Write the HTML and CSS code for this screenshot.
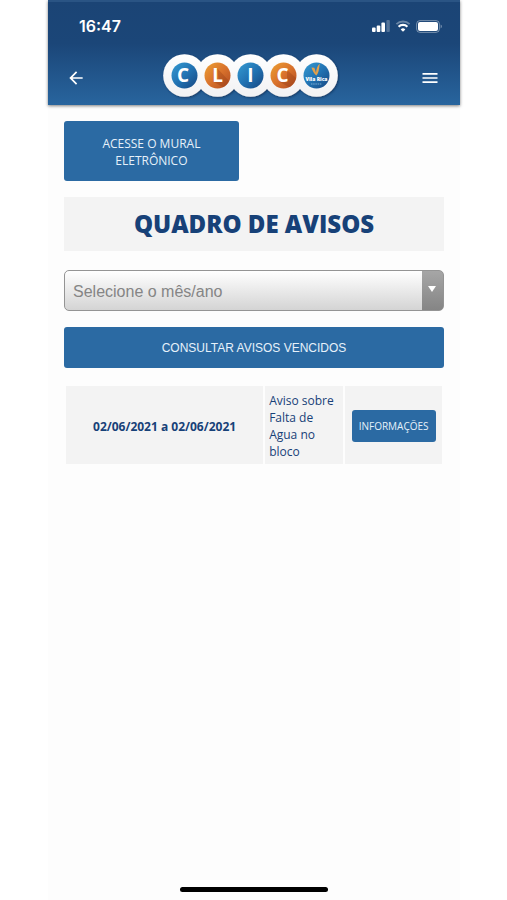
FILE: index.html
```html
<!DOCTYPE html>
<html lang="pt-BR">
<head>
  <meta charset="utf-8">
  <meta name="viewport" content="width=device-width, initial-scale=1">
  <title>Quadro de Avisos</title>
  <link rel="stylesheet" href="styles.css">
</head>
<body>
  <div class="screen">
    <header class="header">
      <div class="status">
        <span class="clock">16:47</span>
        <div class="status-icons">
          <svg width="18" height="12" viewBox="0 0 18 12" aria-hidden="true">
            <g fill="#fff">
              <rect x="0" y="7.500" width="3.600" height="4.500" rx="1"/>
              <rect x="4.700" y="5.500" width="3.600" height="6.500" rx="1"/>
              <rect x="9.400" y="2.500" width="3.600" height="9.500" rx="1"/>
              <rect x="14.400" y="0" width="3.400" height="12" rx="1" opacity=".25"/>
            </g>
          </svg>
          <svg width="16" height="12" viewBox="0 0 16 12" fill="none" aria-hidden="true">
            <path d="M1.400 4.200a9.400 9.400 0 0 1 13.200 0" stroke="#fff" stroke-opacity=".35" stroke-width="1.800"/>
            <path d="M3.600 6.700a6.300 6.300 0 0 1 8.800 0" stroke="#fff" stroke-width="2.200"/>
            <path d="M5.700 9.400a3.300 3.300 0 0 1 4.600 0L8 11.800z" fill="#fff"/>
          </svg>
          <svg width="27" height="13" viewBox="0 0 27 13" aria-hidden="true">
            <rect x=".6" y=".6" width="22.800" height="11.800" rx="3.400" fill="none" stroke="#fff" stroke-opacity=".4"/>
            <rect x="2" y="2" width="20" height="9" rx="2" fill="#fff"/>
            <path d="M24.600 4.600c1.800.5 1.800 3.300 0 3.800z" fill="#fff" fill-opacity=".4"/>
          </svg>
        </div>
      </div>
      <nav class="navbar">
        <button class="icon-button" type="button" aria-label="Voltar">
          <svg width="20" height="20" viewBox="0 0 24 24" fill="#fff" aria-hidden="true"><path d="M20 11H7.83l5.59-5.59L12 4l-8 8 8 8 1.41-1.41L7.83 13H20z"/></svg>
        </button>
        <svg class="logo" width="180" height="48" viewBox="0 0 180 48" role="img" aria-label="CLICO Vila Rica">
          <defs>
            <linearGradient id="blue" x1="0" y1="0" x2="1" y2="1">
              <stop offset="0" stop-color="#359bd2"/><stop offset=".5" stop-color="#2273b3"/><stop offset="1" stop-color="#174681"/>
            </linearGradient>
            <linearGradient id="orange" x1="0" y1="0" x2="1" y2="1">
              <stop offset="0" stop-color="#eda033"/><stop offset=".5" stop-color="#d9722c"/><stop offset="1" stop-color="#b04c22"/>
            </linearGradient>
            <linearGradient id="ring" x1="0" y1="0" x2="0" y2="1">
              <stop offset="0" stop-color="#fff"/><stop offset="1" stop-color="#f1f1f3"/>
            </linearGradient>
            <filter id="shade" x="-10%" y="-20%" width="120%" height="150%">
              <feDropShadow dx="1" dy="1" stdDeviation="1" flood-color="#07294f" flood-opacity=".7"/>
            </filter>
          </defs>
          <g filter="url(#shade)">
            <circle cx="24.500" cy="23.500" r="21.300" fill="url(#ring)"/>
            <circle cx="57.500" cy="23.500" r="21.300" fill="url(#ring)"/>
            <circle cx="90.500" cy="23.500" r="21.300" fill="url(#ring)"/>
            <circle cx="123.500" cy="23.500" r="21.300" fill="url(#ring)"/>
            <circle cx="156.500" cy="23.500" r="21.300" fill="url(#ring)"/>
          </g>
          <circle cx="24.500" cy="23.500" r="13" fill="url(#blue)"/>
          <circle cx="57.500" cy="23.500" r="13" fill="url(#orange)"/>
          <circle cx="90.500" cy="23.500" r="13" fill="url(#blue)"/>
          <circle cx="123.500" cy="23.500" r="13" fill="url(#orange)"/>
          <circle cx="156.500" cy="23.500" r="13" fill="url(#blue)"/>
          <path d="M57 16l12 13a13 13 0 0 1-6 6.200L54 30h5z" fill="#8a3410" opacity=".3"/>
          <path d="M127 18l9 8a13 13 0 0 1-7 9.200L120 30l7-1z" fill="#8a3410" opacity=".3"/>
          <g class="logo-letters">
            <text x="23" y="30">C</text>
            <text x="57.500" y="30">L</text>
            <text x="90.500" y="30">I</text>
            <text x="122.500" y="30">C</text>
          </g>
          <path d="M151.400 15.500l3 .2 1.600 5c.3-4 1.500-7 3.800-9.200l-.8 5.500c-.4 3-1.300 5-2.700 6.600-2.200-2-3.900-4.800-4.900-8.100z" fill="#e3a04a"/>
          <text class="logo-name" x="156.500" y="29">Vila Rica</text>
          <path d="M151 32h11" stroke="#b9dcf3" stroke-dasharray="1.500 .7" opacity=".6"/>
        </svg>
        <button class="icon-button" type="button" aria-label="Menu">
          <svg width="20" height="20" viewBox="0 0 24 24" fill="#fff" aria-hidden="true"><path d="M3 18h18v-2H3v2zm0-5h18v-2H3v2zm0-7v2h18V6H3z"/></svg>
        </button>
      </nav>
    </header>

    <main class="content">
      <a class="button mural" href="#mural">ACESSE O MURAL ELETRÔNICO</a>
      <h1 class="title">QUADRO DE AVISOS</h1>
      <div class="picker">
        <select class="picker-select" aria-label="Selecione o mês/ano">
          <option>Selecione o mês/ano</option>
        </select>
      </div>
      <button class="button expired" type="button">CONSULTAR AVISOS VENCIDOS</button>
      <table class="notices">
        <tr>
          <td class="period">02/06/2021 a 02/06/2021</td>
          <td class="subject">Aviso sobre Falta de Agua no bloco</td>
          <td class="action"><button class="button info" type="button">INFORMAÇÕES</button></td>
        </tr>
      </table>
    </main>

    <div class="home-bar"></div>
  </div>
</body>
</html>
```

FILE: styles.css
```css
* {
  box-sizing: border-box;
}

body {
  margin: 0;
  background: #fff;
  color: #174178;
  font-family: "Open Sans", sans-serif;
  font-size: 12px;
}

.screen {
  display: flex;
  flex-direction: column;
  min-height: 100vh;
  margin: 0 47px 0 48px;
  background: #fdfdfd;
}

.header {
  background: linear-gradient(#1b4475 0%, #1b4678 40%, #28659e 100%);
  border-top: 2px solid #2a5484;
  box-shadow: 0 1px 3px rgba(0, 0, 0, 0.5);
}

.status {
  display: flex;
  align-items: center;
  justify-content: space-between;
  height: 48px;
  padding: 0 17px 0 31px;
}

.clock {
  color: #fff;
  font-family: Inter, sans-serif;
  font-size: 16px;
  font-weight: 600;
}

.status-icons {
  display: flex;
  align-items: center;
  gap: 5px;
}

.navbar {
  display: flex;
  align-items: center;
  justify-content: space-between;
  height: 55px;
  padding: 0 20px 0 18px;
}

.icon-button {
  display: flex;
  padding: 0;
  border: 0;
  background: none;
}

.logo {
  margin: 0 6px 3px 0;
}

.logo-letters {
  fill: #fff;
  font: 700 19px "Open Sans", sans-serif;
  text-anchor: middle;
}

.logo-name {
  fill: #fff;
  font: 800 5px "Open Sans", sans-serif;
  text-anchor: middle;
}

.content {
  display: flex;
  flex: 1;
  flex-direction: column;
  gap: 16px;
  padding: 16px;
}

.button {
  border: 0;
  border-radius: 3px;
  background: #2b6aa3;
  color: #e6f1fa;
  font-family: "Open Sans", sans-serif;
  font-size: 12px;
  text-align: center;
  text-decoration: none;
}

.mural {
  width: 46%;
  padding: 14px 32px 12px;
  line-height: 17px;
}

.title {
  margin: 0;
  padding: 10px;
  background: #f3f3f3;
  font-size: 24px;
  font-weight: 800;
  line-height: 34px;
  text-align: center;
}

.picker {
  position: relative;
  margin-top: 3px;
}

.picker-select {
  display: block;
  width: 100%;
  height: 41px;
  padding: 2px 32px 0 8px;
  border: 1px solid #949494;
  border-radius: 5px;
  appearance: none;
  background:
    linear-gradient(#a6a6a6, #858585) right / 21px 100% no-repeat,
    linear-gradient(#fff, #d4d4d4);
  color: #858585;
  font-family: "Liberation Sans", sans-serif;
  font-size: 16px;
}

.picker::after {
  position: absolute;
  top: 16px;
  right: 8px;
  border: solid transparent;
  border-width: 6px 4px 0;
  border-top-color: #fff;
  content: "";
  pointer-events: none;
}

.expired {
  height: 41px;
  font-family: "Liberation Sans", sans-serif;
}

.notices {
  width: 100%;
  border-spacing: 2px;
  table-layout: fixed;
}

.notices td {
  padding: 6px 4px 4px;
  background: #f3f3f3;
  line-height: 17px;
}

.notices .period {
  width: 53%;
  font-weight: 700;
  text-align: center;
}

.notices .subject {
  width: 21%;
}

.notices .action {
  text-align: center;
}

.info {
  width: 84px;
  height: 32px;
  padding: 0;
  font-size: 10px;
}

.home-bar {
  align-self: center;
  width: 36%;
  height: 5px;
  margin-bottom: 8px;
  border-radius: 3px;
  background: #000;
}
```
